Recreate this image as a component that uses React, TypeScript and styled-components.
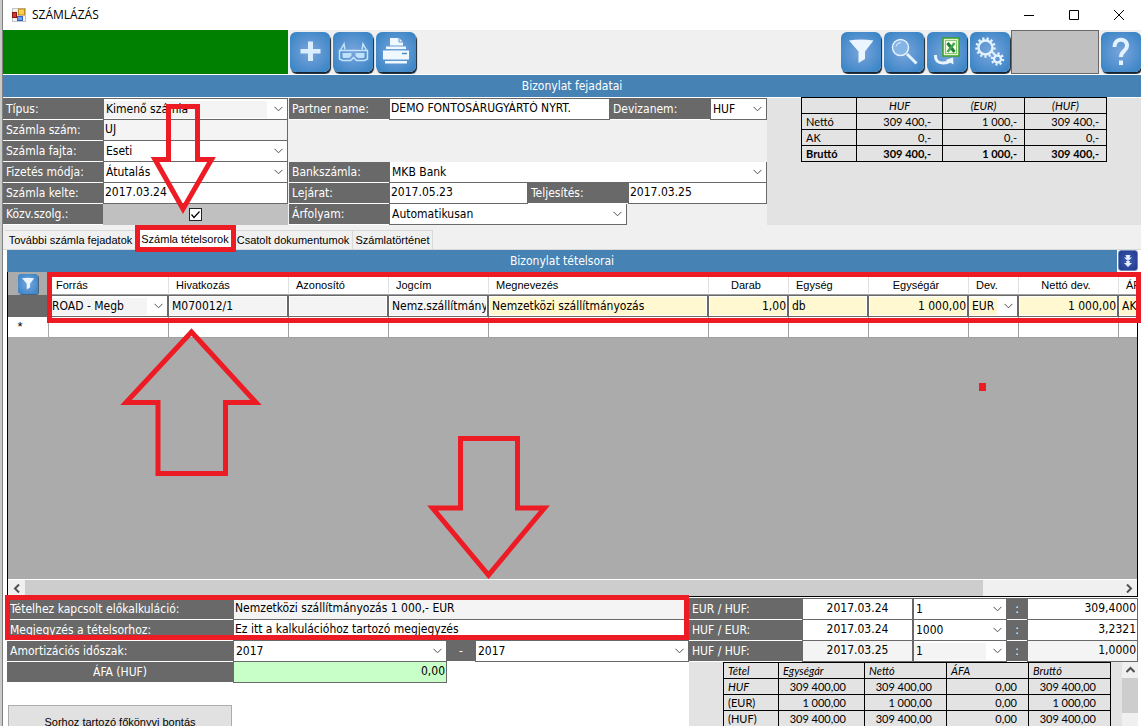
import React from "react";
import styled, { createGlobalStyle, css } from "styled-components";

const ui = `"DejaVu Sans Condensed", "DejaVu Sans", sans-serif`;
const small = `"Liberation Sans", Arial, sans-serif`;
const report = `Lato, "Open Sans", sans-serif`;
const steel = "#4682b4";
const dim = "#696969";
const red = "#ed1c24";

const GlobalStyle = createGlobalStyle`
  *, *::before, *::after { box-sizing: border-box; }
  body { margin: 0; overflow: hidden; background: #f0f0f0; }
  button, input, select { font: inherit; color: inherit; margin: 0; border-radius: 0; }
`;

const Screen = styled.div`
  position: relative;
  display: flex;
  flex-direction: column;
  height: 100vh;
  overflow: hidden;
  border-left: 1px solid #808080;
  margin-left: 2px;
  box-shadow: -2px 0 0 #c9cbc9;
  background: #f0f0f0;
  font: 12px/20px ${ui};
  color: #000;
`;

const TitleBar = styled.header`
  display: flex;
  align-items: center;
  height: 30px;
  flex: none;
  padding-left: 9px;
  background: #fff;
`;
const Title = styled.h1`
  flex: 1;
  margin: 0 0 0 6px;
  font: 12px/28px "Open Sans", "Noto Sans", sans-serif;
`;
const WindowButton = styled.button`
  display: grid;
  place-items: center;
  width: 45px;
  height: 28px;
  padding: 0;
  border: 0;
  background: none;
`;

const Toolbar = styled.div`
  display: flex;
  gap: 2px;
  height: 44px;
  flex: none;
  margin-right: -1px;
`;
const StatusBlock = styled.div`
  width: 285px;
  background: #008000;
`;
const Spacer = styled.div`
  flex: 1;
`;
const IconButton = styled.button`
  width: 40px;
  height: 40px;
  margin: 2px 1px 0 0;
  padding: 0;
  border: 0;
  border-radius: 6px;
  background: radial-gradient(circle at 50% 50%, #7ba5da 0%, #5e97d3 40%, #3d86c6 85%);
  box-shadow: 1px 2px 1px #15222e;
  svg { display: block; width: 40px; height: 40px; }
`;
const Placeholder = styled.div`
  width: 88px;
  margin-left: -2px;
  border: 1px solid ${dim};
  background: #c0c0c0;
`;

const Band = styled.h2`
  flex: 1;
  height: 22px;
  margin: 0;
  background: ${steel};
  color: #fff;
  font: 12px/23px ${ui};
  text-align: center;
`;
const HeadBand = styled.div`
  display: flex;
  flex: none;
  height: 24px;
  padding: 1px 0;
  background: #fff;
`;

const HeadPanel = styled.section`
  display: flex;
  flex: none;
  gap: 1px;
`;
const FormColumn = styled.div<{ $width: number }>`
  width: ${(p) => p.$width}px;
  flex: none;
`;
const Row = styled.div<{ $first?: boolean }>`
  display: flex;
  height: ${(p) => (p.$first ? 22 : 21)}px;
  ${(p) =>
    p.$first &&
    css`
      && > * {
        height: 22px;
        border-top: 1px solid ${dim};
      }
    `}
`;
const Caption = styled.label<{ $width: number; $center?: boolean }>`
  width: ${(p) => p.$width}px;
  flex: none;
  padding: 0 3px;
  border-bottom: 1px solid #fff;
  background: ${dim};
  color: #fff;
  line-height: 21px;
  white-space: nowrap;
  text-align: ${(p) => (p.$center ? "center" : "left")};
`;
const fieldBox = css<{ $width?: number; $tone?: string }>`
  ${(p) => (p.$width ? `width: ${p.$width}px; flex: none;` : "flex: 1; min-width: 0;")}
  height: 21px;
  border: 1px solid ${dim};
  border-width: 0 1px 1px;
  background: ${(p) => p.$tone ?? "#fff"};
`;
const TextField = styled.input<{ $width?: number; $tone?: string; $align?: string }>`
  ${fieldBox}
  padding: 0 1px 2px;
  line-height: 18px;
  text-align: ${(p) => p.$align ?? "left"};
  outline: 0;
`;
const SelectBox = styled.div<{ $width?: number; $tone?: string }>`
  ${fieldBox}
  display: grid;
  align-items: center;
  background: #fff;
  select {
    grid-area: 1 / 1;
    width: calc(100% - 20px);
    height: 17px;
    padding: 0 2px;
    border: 0;
    appearance: none;
    background: ${(p) => p.$tone ?? "#fff"};
    line-height: 16px;
    outline: 0;
  }
  svg { grid-area: 1 / 1; justify-self: end; margin-right: 4px; pointer-events: none; }
`;
const CheckCell = styled.div`
  flex: 1;
  display: grid;
  place-items: center;
  background: #c0c0c0;
`;
const Check = styled.input`
  appearance: none;
  width: 13px;
  height: 13px;
  margin: 0;
  border: 1px solid #222;
  background: #fff;
  & + svg { visibility: hidden; }
  &:checked + svg { visibility: visible; }
`;
const CheckWrap = styled.span`
  display: grid;
  svg, input { grid-area: 1 / 1; }
  svg { pointer-events: none; }
`;

const Totals = styled.div`
  flex: 1;
  min-width: 0;
  margin-left: -1px;
  padding-left: 34px;
  background: #e3e3e3;
`;
const ReportTable = styled.table`
  border-collapse: collapse;
  table-layout: fixed;
  font: 11px/15px ${report};
  background: #e3e3e3;
  th, td {
    height: 16px;
    padding: 0 4px;
    border: 1px solid #000;
    font-weight: normal;
    text-align: left;
    white-space: nowrap;
  }
  thead th { font-style: italic; }
`;
const TotalsTable = styled(ReportTable)`
  width: 306px;
  margin-top: -1px;
  thead th { text-align: center; }
  td { text-align: right; padding-right: 7px; }
  td:nth-child(2) { padding-right: 11px; }
  tbody tr:last-child > * { font-weight: bold; }
`;
const ItemTotals = styled(ReportTable)`
  width: 388px;
  flex: none;
  td { text-align: right; padding-right: 14px; }
  td:nth-child(2) { padding-right: 18px; }
  td:nth-child(4) { padding-right: 11px; }
  tbody tr:first-child th { font-style: italic; }
`;

const Tabs = styled.nav`
  display: flex;
  align-items: flex-end;
  flex: none;
  height: 25px;
  padding-left: 2px;
  border-bottom: 1px solid #d9d9d9;
`;
const Tab = styled.button<{ $width: number; $active?: boolean }>`
  width: ${(p) => p.$width}px;
  height: ${(p) => (p.$active ? 21 : 19)}px;
  padding: 0;
  border: 1px solid #d9d9d9;
  border-width: 1px 1px 0 0;
  background: ${(p) => (p.$active ? "#fff" : "#f0f0f0")};
  font: 11px/18px ${small};
  white-space: nowrap;
`;

const Page = styled.main`
  display: flex;
  flex-direction: column;
  flex: 1;
  min-height: 0;
  padding: 0 3px 0 4px;
  background: #fff;
`;
const GridBand = styled.div`
  display: flex;
  flex: none;
  gap: 1px;
`;
const ExpandButton = styled.button`
  width: 20px;
  height: 21px;
  padding: 0;
  border: 1px solid #6c87b8;
  border-radius: 3px;
  background: radial-gradient(circle, #3c5cb4, #22388c);
  svg { display: block; }
`;
const GridFrame = styled.section`
  flex: none;
  overflow: hidden;
  border: 1px solid #000;
  border-top: 0;
  background: #ababab;
`;
const GridCanvas = styled.div`
  height: 308px;
  overflow: hidden;
  border-bottom: 1px solid #fff;
`;
const ItemsTable = styled.table`
  width: 1170px;
  border-collapse: separate;
  border-spacing: 0;
  table-layout: fixed;
`;
const HeadCell = styled.th<{ $align?: string }>`
  height: 23px;
  padding: 3px 12px 0 7px;
  border-right: 1px solid #e0e0e0;
  border-bottom: 1px solid #a0a0a0;
  background: #fff;
  font: 11px/18px ${small};
  text-align: ${(p) => p.$align ?? "left"};
  white-space: nowrap;
  overflow: hidden;
`;
const Corner = styled.th`
  padding: 0 0 0 10px;
  background: #ababab;
`;
const FilterButton = styled(IconButton)`
  display: block;
  width: 20px;
  height: 20px;
  margin: 0;
  border-radius: 3px;
  box-shadow: 1px 1px 0 #46627c;
  svg { width: 20px; height: 20px; }
`;
const RowHead = styled.th<{ $current?: boolean }>`
  height: ${(p) => (p.$current ? 22 : 21)}px;
  padding: 0 16px 0 0;
  border: 1px solid ${(p) => (p.$current ? dim : "#ababab")};
  border-width: 0 1px 1px 0;
  background: ${(p) => (p.$current ? dim : "#fff")};
  font: 13px/20px ${small};
`;
const Cell = styled.td`
  height: 22px;
  padding: 0;
  border: 1px solid ${dim};
  border-width: 1px 2px 1px 0;
`;
const EmptyCell = styled.td`
  padding: 0;
  border: 1px solid #a0a0a0;
  border-width: 0 1px 1px 0;
  background: #fff;
`;
const CellInput = styled.input<{ $tone: string; $align?: string }>`
  display: block;
  width: 100%;
  height: 20px;
  padding: 0 0 0 2px;
  border: 1px solid #fff;
  background: ${(p) => p.$tone};
  text-align: ${(p) => p.$align ?? "left"};
  outline: 0;
`;
const CellSelect = styled(SelectBox)`
  height: 20px;
  border: 0;
  select { padding: 0 3px; }
`;
const ScrollRow = styled.div`
  display: flex;
  height: 16px;
  background: #f0f0f0;
`;
const ScrollArrow = styled.button`
  display: grid;
  place-items: center;
  width: 17px;
  height: 16px;
  padding: 0;
  border: 0;
  background: #f0f0f0;
`;
const ScrollTrack = styled.div`
  display: flex;
  flex: 1;
`;
const ScrollThumb = styled.div`
  flex: 0 0 calc(100% * 7 / 8);
  background: #cdcdcd;
`;

const Details = styled.section`
  display: flex;
  flex: 1;
  min-height: 0;
  overflow: hidden;
  padding-top: 1px;
`;
const DetailsLeft = styled.div`
  flex: 1;
  min-width: 0;
`;
const DetailsRight = styled.div`
  width: 449px;
  flex: none;
  background: #e3e3e3;
`;
const Dash = styled.span<{ $width: number }>`
  width: ${(p) => p.$width}px;
  flex: none;
  border-bottom: 1px solid #fff;
  background: ${dim};
  color: #fff;
  text-align: center;
`;
const BreakdownButton = styled.button`
  display: block;
  width: 224px;
  height: 33px;
  margin: 22px 0 0 1px;
  border: 1px solid #adadad;
  background: #e1e1e1;
  font: 11px/18px ${small};
`;
const ReportArea = styled.div`
  display: flex;
  justify-content: space-between;
  padding-left: 34px;
`;
const VerticalScroll = styled.div`
  display: flex;
  flex-direction: column;
  width: 16px;
  background: #f0f0f0;
`;
const VerticalThumb = styled.div`
  height: 35px;
  background: #cdcdcd;
`;

const Markup = styled.svg`
  position: absolute;
  top: 0;
  left: -3px;
  pointer-events: none;
`;

const Chevron = () => (
  <svg width="9" height="6" viewBox="0 0 9 6" fill="none" stroke="#505050">
    <path d="M.5 .8 4.5 4.8 8.5 .8" />
  </svg>
);

type SelectProps = { id?: string; label?: string; value: string; width?: number; tone?: string };
const Select = ({ id, label, value, width, tone }: SelectProps) => (
  <SelectBox $width={width} $tone={tone}>
    <select id={id} aria-label={label}>
      <option>{value}</option>
    </select>
    <Chevron />
  </SelectBox>
);

const Funnel = () => (
  <svg viewBox="0 0 40 40" fill="#eaf5ff">
    <path d="M8 8.5Q20 6.500 32.500 8.500L24 19.500V27L17.500 31V19.500Z" />
  </svg>
);

const gear = (cx: number, cy: number, r: number, teeth: number) => (
  <g>
    <circle cx={cx} cy={cy} r={r} fill="none" strokeWidth="2.4" />
    <circle
      cx={cx}
      cy={cy}
      r={r + 2}
      fill="none"
      strokeWidth="2.4"
      pathLength={teeth * 2}
      strokeDasharray="1 1"
    />
  </g>
);

const grey = "#f4f4f4";
const cream = "#fff8d0";

const rates = [
  { id: "r1", pair: "EUR / HUF:", date: "2017.03.24", unit: "1", rate: "309,4000", tone: "#fff" },
  { id: "r2", pair: "HUF / EUR:", date: "2017.03.24", unit: "1000", rate: "3,2321", tone: "#fff" },
  { id: "r3", pair: "HUF / HUF:", date: "2017.03.25", unit: "1", rate: "1,0000", tone: grey },
];

const columns = [
  { name: "Forrás", width: 120 },
  { name: "Hivatkozás", width: 120 },
  { name: "Azonosító", width: 100 },
  { name: "Jogcím", width: 100 },
  { name: "Megnevezés", width: 220 },
  { name: "Darab", width: 80, align: "center" },
  { name: "Egység", width: 80 },
  { name: "Egységár", width: 100, align: "center" },
  { name: "Dev.", width: 50 },
  { name: "Nettó dev.", width: 100, align: "center" },
  { name: "ÁFA", width: 60 },
];

const totals = [
  ["Nettó", "309 400,-", "1 000,-", "309 400,-"],
  ["AK", "0,-", "0,-", "0,-"],
  ["Bruttó", "309 400,-", "1 000,-", "309 400,-"],
];

const itemTotals = [
  ["HUF", "309 400,00", "309 400,00", "0,00", "309 400,00"],
  ["(EUR)", "1 000,00", "1 000,00", "0,00", "1 000,00"],
  ["(HUF)", "309 400,00", "309 400,00", "0,00", "309 400,00"],
];

export default function App() {
  return (
    <>
      <GlobalStyle />
      <Screen>
        <TitleBar>
          <svg width="14" height="14" viewBox="0 0 14 14">
            <rect x=".5" y=".5" width="13" height="13" fill="#f2f2f2" stroke="#c4c4c4" />
            <rect x="6.500" y="1" width="6" height="6" fill="#ffd04a" stroke="#b88a1c" />
            <rect x=".5" y="4.500" width="4" height="5" fill="#d23a2e" stroke="#8e1410" />
            <rect x="5.500" y="8.500" width="5" height="4" fill="#6fa0ee" stroke="#3763c0" />
          </svg>
          <Title>SZÁMLÁZÁS</Title>
          <WindowButton aria-label="Kis méret">
            <svg width="10" height="10" stroke="#000"><path d="M0 5.500H10" /></svg>
          </WindowButton>
          <WindowButton aria-label="Teljes méret">
            <svg width="10" height="10" stroke="#000" fill="none"><path d="M.5 .5H9.500V9.500H.5Z" /></svg>
          </WindowButton>
          <WindowButton aria-label="Bezárás">
            <svg width="10" height="10" stroke="#000"><path d="M0 0 10 10M10 0 0 10" /></svg>
          </WindowButton>
        </TitleBar>

        <Toolbar>
          <StatusBlock />
          <IconButton aria-label="Új">
            <svg viewBox="0 0 40 40" fill="#d9efff"><path d="M18 9.500H23V17H30.500V21.500H23V29H18V21.500H10.500V17H18Z" /></svg>
          </IconButton>
          <IconButton aria-label="Megtekintés">
            <svg viewBox="0 0 40 40" fill="none" stroke="#c4e4fb" strokeWidth="1.500">
              <path d="M7 19 11 12 12 17.500M34 19 30 12 29 17.500" />
              <path d="M6.500 18.500H34.500V27L31.500 28.500H23.500L20.500 25.500 17.500 28.500H9.500L6.500 27Z" />
              <path d="M9.500 21H18.500V24L16 26H10.500L9.500 25ZM31.500 21H22.500V24L25 26H30.500L31.500 25Z" fill="#bfe2fa" stroke="none" />
            </svg>
          </IconButton>
          <IconButton aria-label="Nyomtatás">
            <svg viewBox="0 0 40 40" fill="#eff8ff">
              <path d="M14 6H23L27 10V13.500H14Z" />
              <path d="M23 6V10H27" fill="none" stroke="#5b93cf" />
              <path d="M10 14.500H30V17H10Z" />
              <path d="M7 18.500H33V27.500H7Z" />
              <path d="M26 21.500H31" stroke="#4a8cca" strokeWidth="1.500" />
              <path d="M9 29H31V31.500H9Z" />
            </svg>
          </IconButton>
          <Spacer />
          <IconButton aria-label="Szűrő"><Funnel /></IconButton>
          <IconButton aria-label="Keresés">
            <svg viewBox="0 0 40 40" fill="none" stroke="#e3f2ff">
              <circle cx="16.500" cy="15.500" r="8" strokeWidth="1.500" fill="#86b4e4" />
              <path d="M12 14.500Q13 10.500 17 10.500" />
              <path d="M23 22 32.500 31.500" strokeWidth="3" />
            </svg>
          </IconButton>
          <IconButton aria-label="Exportálás">
            <svg viewBox="0 0 40 40">
              <rect x="16" y="6" width="16" height="18" fill="#e5f5cf" stroke="#3aa125" strokeWidth="1.500" />
              <rect x="18.500" y="8.500" width="11" height="13" fill="#f7fff0" stroke="#8cc873" />
              <path d="M20.500 11 27.500 20" stroke="#1f7d3c" strokeWidth="3" />
              <path d="M27.500 11 20.500 20" stroke="#46a548" strokeWidth="2.500" />
              <path d="M8.500 23Q8 31 16 31Q22 31 23.500 28" fill="none" stroke="#e8f5ff" strokeWidth="3" />
              <path d="M18.500 28 26 25.500 26.500 32.500Z" fill="#e8f5ff" />
            </svg>
          </IconButton>
          <IconButton aria-label="Beállítások">
            <svg viewBox="0 0 40 40" stroke="#e3f3ff">
              {gear(15.5, 15.5, 7, 13)}
              {gear(27.5, 27, 3.5, 8)}
            </svg>
          </IconButton>
          <Placeholder />
          <IconButton aria-label="Súgó">
            <svg viewBox="0 0 40 40" fill="none" stroke="#e3f3ff" strokeWidth="4">
              <path d="M13.500 15C13 5.500 26.500 5.500 26 14C26 19 20 18.500 20 25" />
              <path d="M20 28.500V33" />
            </svg>
          </IconButton>
        </Toolbar>

        <HeadBand><Band>Bizonylat fejadatai</Band></HeadBand>

        <HeadPanel>
          <FormColumn $width={285}>
            <Row $first>
              <Caption $width={100} htmlFor="tipus">Típus:</Caption>
              <Select id="tipus" value="Kimenő számla" tone={grey} />
            </Row>
            <Row>
              <Caption $width={100} htmlFor="szam">Számla szám:</Caption>
              <TextField id="szam" defaultValue="UJ" $tone={grey} />
            </Row>
            <Row>
              <Caption $width={100} htmlFor="fajta">Számla fajta:</Caption>
              <Select id="fajta" value="Eseti" />
            </Row>
            <Row>
              <Caption $width={100} htmlFor="mod">Fizetés módja:</Caption>
              <Select id="mod" value="Átutalás" />
            </Row>
            <Row>
              <Caption $width={100} htmlFor="kelte">Számla kelte:</Caption>
              <TextField id="kelte" defaultValue="2017.03.24" />
            </Row>
            <Row>
              <Caption $width={100} htmlFor="kozv">Közv.szolg.:</Caption>
              <CheckCell>
                <CheckWrap>
                  <Check id="kozv" type="checkbox" defaultChecked />
                  <svg width="13" height="13" fill="none" stroke="#000" strokeWidth="1.200">
                    <path d="M2.500 6.500 5 9.500 10.500 3.500" />
                  </svg>
                </CheckWrap>
              </CheckCell>
            </Row>
          </FormColumn>
          <FormColumn $width={478}>
            <Row $first>
              <Caption $width={100} htmlFor="partner">Partner name:</Caption>
              <TextField id="partner" defaultValue="DEMO FONTOSÁRUGYÁRTÓ NYRT." />
              <Caption $width={100} htmlFor="deviza">Devizanem:</Caption>
              <Select id="deviza" value="HUF" width={57} />
            </Row>
            <Row />
            <Row />
            <Row>
              <Caption $width={100} htmlFor="bank">Bankszámla:</Caption>
              <Select id="bank" value="MKB Bank" />
            </Row>
            <Row>
              <Caption $width={100} htmlFor="lejarat">Lejárat:</Caption>
              <TextField id="lejarat" defaultValue="2017.05.23" />
              <Caption $width={100} htmlFor="telj">Teljesítés:</Caption>
              <TextField id="telj" defaultValue="2017.03.25" />
            </Row>
            <Row>
              <Caption $width={100} htmlFor="arfolyam">Árfolyam:</Caption>
              <Select id="arfolyam" value="Automatikusan" width={238} />
            </Row>
          </FormColumn>
          <Totals>
            <TotalsTable>
              <colgroup>
                <col width="55" /><col width="86" /><col width="82" /><col width="82" />
              </colgroup>
              <thead>
                <tr><th /><th>HUF</th><th>(EUR)</th><th>(HUF)</th></tr>
              </thead>
              <tbody>
                {totals.map(([name, ...values]) => (
                  <tr key={name}>
                    <th>{name}</th>
                    {values.map((v, i) => <td key={i}>{v}</td>)}
                  </tr>
                ))}
              </tbody>
            </TotalsTable>
          </Totals>
        </HeadPanel>

        <Tabs>
          <Tab $width={132}>További számla fejadatok</Tab>
          <Tab $width={97} $active>Számla tételsorok</Tab>
          <Tab $width={119}>Csatolt dokumentumok</Tab>
          <Tab $width={80}>Számlatörténet</Tab>
        </Tabs>

        <Page>
          <GridBand>
            <Band>Bizonylat tételsorai</Band>
            <ExpandButton aria-label="Lenyitás">
              <svg width="18" height="18" fill="#e6eeff">
                <path d="M6.500 3H11.500L10.500 5.500H13L9 9 5 5.500H7.500ZM7 9H11L10.500 11H13L9 15 5 11H7.500Z" />
              </svg>
            </ExpandButton>
          </GridBand>
          <GridFrame>
            <GridCanvas>
              <ItemsTable>
                <colgroup>
                  <col width="41" />
                  {columns.map((c) => <col key={c.name} width={c.width} />)}
                </colgroup>
                <thead>
                  <tr>
                    <Corner><FilterButton aria-label="Szűrés"><Funnel /></FilterButton></Corner>
                    {columns.map((c) => <HeadCell key={c.name} $align={c.align}>{c.name}</HeadCell>)}
                  </tr>
                </thead>
                <tbody>
                  <tr>
                    <RowHead $current />
                    <Cell>
                      <CellSelect $tone={grey}>
                        <select aria-label="Forrás"><option>ROAD - Megb</option></select>
                        <Chevron />
                      </CellSelect>
                    </Cell>
                    <Cell><CellInput aria-label="Hivatkozás" defaultValue="M070012/1" $tone={grey} /></Cell>
                    <Cell><CellInput aria-label="Azonosító" $tone={grey} /></Cell>
                    <Cell><CellInput aria-label="Jogcím" defaultValue="Nemz.szállítmányozás" $tone={grey} /></Cell>
                    <Cell><CellInput aria-label="Megnevezés" defaultValue="Nemzetközi szállítmányozás" $tone={cream} /></Cell>
                    <Cell><CellInput aria-label="Darab" defaultValue="1,00" $tone={cream} $align="right" /></Cell>
                    <Cell><CellInput aria-label="Egység" defaultValue="db" $tone={cream} /></Cell>
                    <Cell><CellInput aria-label="Egységár" defaultValue="1 000,00" $tone={cream} $align="right" /></Cell>
                    <Cell>
                      <CellSelect $tone={cream}>
                        <select aria-label="Deviza"><option>EUR</option></select>
                        <Chevron />
                      </CellSelect>
                    </Cell>
                    <Cell><CellInput aria-label="Nettó dev." defaultValue="1 000,00" $tone={cream} $align="right" /></Cell>
                    <Cell><CellInput aria-label="ÁFA" defaultValue="AK" $tone={cream} /></Cell>
                  </tr>
                  <tr>
                    <RowHead>*</RowHead>
                    {columns.map((c) => <EmptyCell key={c.name} />)}
                  </tr>
                </tbody>
              </ItemsTable>
            </GridCanvas>
            <ScrollRow>
              <ScrollArrow aria-label="Balra">
                <svg width="8" height="9" fill="none" stroke="#505050" strokeWidth="2"><path d="M6 .5 2 4.500 6 8.500" /></svg>
              </ScrollArrow>
              <ScrollTrack><ScrollThumb /></ScrollTrack>
              <ScrollArrow aria-label="Jobbra">
                <svg width="8" height="9" fill="none" stroke="#505050" strokeWidth="2"><path d="M2 .5 6 4.500 2 8.500" /></svg>
              </ScrollArrow>
            </ScrollRow>
          </GridFrame>

          <Details>
            <DetailsLeft>
              <Row $first>
                <Caption $width={226} htmlFor="kalk">Tételhez kapcsolt előkalkuláció:</Caption>
                <TextField id="kalk" defaultValue="Nemzetközi szállítmányozás 1 000,- EUR" $tone={grey} />
              </Row>
              <Row>
                <Caption $width={226} htmlFor="megj">Megjegyzés a tételsorhoz:</Caption>
                <TextField id="megj" defaultValue="Ez itt a kalkulációhoz tartozó megjegyzés" />
              </Row>
              <Row>
                <Caption $width={226} htmlFor="amort">Amortizációs időszak:</Caption>
                <Select id="amort" value="2017" width={214} />
                <Dash $width={28}>-</Dash>
                <Select label="Időszak vége" value="2017" />
              </Row>
              <Row>
                <Caption $width={226} $center htmlFor="afa">ÁFA (HUF)</Caption>
                <TextField id="afa" defaultValue="0,00" $width={214} $tone="#c8ffc8" $align="right" />
              </Row>
              <BreakdownButton>Sorhoz tartozó főkönyvi bontás</BreakdownButton>
            </DetailsLeft>
            <DetailsRight>
              {rates.map((r, i) => (
                <Row key={r.id} $first={i === 0}>
                  <Caption $width={113} htmlFor={r.id}>{r.pair}</Caption>
                  <TextField id={r.id} defaultValue={r.date} $width={111} $tone={r.tone} $align="center" />
                  <Select label={`${r.pair} egység`} value={r.unit} width={94} tone={r.tone} />
                  <Dash $width={20}>:</Dash>
                  <TextField aria-label={`${r.pair} árfolyam`} defaultValue={r.rate} $tone={r.tone} $align="right" />
                </Row>
              ))}
              <ReportArea>
                <ItemTotals>
                  <colgroup>
                    <col width="55" /><col width="86" /><col width="82" /><col width="82" /><col width="82" />
                  </colgroup>
                  <thead>
                    <tr><th>Tétel</th><th>Egységár</th><th>Nettó</th><th>ÁFA</th><th>Bruttó</th></tr>
                  </thead>
                  <tbody>
                    {itemTotals.map(([name, ...values]) => (
                      <tr key={name}>
                        <th>{name}</th>
                        {values.map((v, i) => <td key={i}>{v}</td>)}
                      </tr>
                    ))}
                  </tbody>
                </ItemTotals>
                <VerticalScroll>
                  <ScrollArrow aria-label="Fel">
                    <svg width="9" height="8" fill="none" stroke="#505050" strokeWidth="2"><path d="M.5 6 4.500 2 8.500 6" /></svg>
                  </ScrollArrow>
                  <VerticalThumb />
                </VerticalScroll>
              </ReportArea>
            </DetailsRight>
          </Details>
        </Page>

        <Markup width="1141" height="726" fill="none" stroke={red} strokeWidth="5">
          <path d="M168.500 106.500H197.500V159.500H211.500L183 209L155 159.500H168.500Z" />
          <path d="M191.500 332 256 402.500H225.500V473.500H158V402.500H126Z" />
          <path d="M460.500 438.500H517.500V508H544.500L488.500 575 432.500 508H460.500Z" />
          <path d="M137.500 227.500H233.500V249.500H137.500Z" />
          <path d="M49.500 274.500H1138.500V320.500H49.500Z" />
          <path d="M7.500 597.500H686.500V637.500H7.500Z" />
          <path d="M979 383H986V391H979Z" fill={red} stroke="none" />
        </Markup>
      </Screen>
    </>
  );
}
